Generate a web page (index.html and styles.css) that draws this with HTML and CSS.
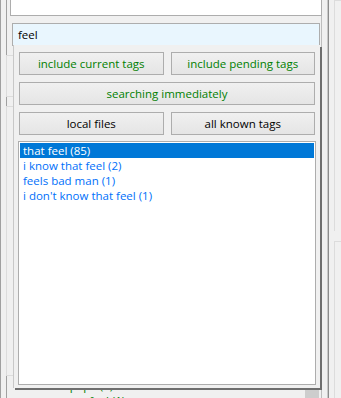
FILE: index.html
```html
<!DOCTYPE html>
<html lang="en">
<head>
    <meta charset="UTF-8">
    <meta name="viewport" content="width=device-width, initial-scale=1.0">
    <title>Tag autocomplete</title>
    <link rel="stylesheet" href="styles.css">
</head>
<body>

    <div class="window">
        <div class="main">
            <div class="panel">
                <div class="results-box"></div>
                <div class="search">feel</div>
                <div class="group"></div>
                <div class="group tall"></div>
                <div class="tag-list">
                    <div class="under-row">character:pepe (1)</div>
                    <div class="under-row">person:some feel (1)</div>
                    <div class="scroll-thumb"></div>
                </div>
            </div>
        </div>
        <div class="side">
            <div class="side-box"></div>
            <div class="side-box"></div>
        </div>

        <!-- dropdown that hangs under the search box -->
        <div class="popup">
            <div class="btn-row">
                <button class="btn green">include current tags</button>
                <button class="btn green">include pending tags</button>
            </div>
            <div class="btn-row">
                <button class="btn green">searching immediately</button>
            </div>
            <div class="btn-row">
                <button class="btn">local files</button>
                <button class="btn">all known tags</button>
            </div>
            <div class="results">
                <div class="result selected">that feel (85)</div>
                <div class="result">i know that feel (2)</div>
                <div class="result">feels bad man (1)</div>
                <div class="result">i don't know that feel (1)</div>
            </div>
        </div>
    </div>

</body>
</html>
```

FILE: styles.css
```css
body {
    margin: 0;
    background-color: #f0f0f0;
    font-family: "Open Sans", "Noto Sans", sans-serif;
    font-size: 11.5px;
}
.window {
    position: relative;
    display: flex;
    width: 341px;
    height: 398px;
    overflow: hidden;
}
.main {
    width: 328px;
    border-left: 1px solid #a0a0a0;
    border-right: 1px solid #c8c8c8;
    padding-left: 5px;
    padding-right: 5px;
    box-sizing: border-box;
}
.panel {
    height: 100%;
    border-left: 1px solid #a0a0a0;
    border-right: 1px solid #bdbdbd;
    padding: 0 3px;
    display: flex;
    flex-direction: column;
}
.panel > div {
    flex-shrink: 0;
}
.results-box {
    height: 15px;
    background-color: white;
    border: 1px solid #adadad;
    border-top: none;
    margin-right: -4px;
}
.search {
    margin: 7px -2px 0 2px;
    height: 21px;
    line-height: 21px;
    padding-left: 5px;
    background-color: #e9f6fe;
    border: 1px solid #adadad;
    color: black;
}
.group {
    height: 40px;
    margin: 9px -3px 0 -4px;
    border: 1px solid #dcdcdc;
}
.group.tall {
    height: 268px;
}
.tag-list {
    position: relative;
    margin-top: 2px;
    padding-left: 6px;
    color: #008000;
    line-height: 15px;
}
.under-row {
    height: 15px;
}
.scroll-thumb {
    position: absolute;
    right: -1px;
    top: 0;
    width: 14px;
    height: 40px;
    background-color: #cdcdcd;
}
.side {
    flex: 1;
    padding: 0 0 0 5px;
    border-left: 1px solid #8c8c8c;
}
.side-box {
    height: 230px;
    border-left: 1px solid #dcdcdc;
    border-top: 1px solid #dcdcdc;
    margin-bottom: 10px;
}
.popup {
    position: absolute;
    left: 13px;
    top: 45px;
    width: 307px;
    height: 343px;
    box-sizing: border-box;
    padding: 7px 5px 3px 5px;
    background-color: #f0f0f0;
    border-left: 1px solid #c8c8c8;
    box-shadow: 2px 2px 0 #6e6e6e;
    display: flex;
    flex-direction: column;
    gap: 7px;
}
.btn-row {
    display: flex;
    gap: 7px;
}
.btn {
    flex: 1;
    height: 23px;
    padding: 0;
    font-family: inherit;
    font-size: 11.5px;
    color: black;
    background: linear-gradient(#f0f0f0, #e5e5e5);
    border: 1px solid #adadad;
}
.btn.green {
    color: #008000;
}
.results {
    flex: 1;
    margin: -1px -1px 0 -1px;
    padding: 1px;
    background-color: white;
    border: 1px solid #adadad;
}
.result {
    height: 15px;
    line-height: 15px;
    padding-left: 3px;
    color: #006ffa;
}
.result.selected {
    background-color: #0078d7;
    color: white;
}
```
